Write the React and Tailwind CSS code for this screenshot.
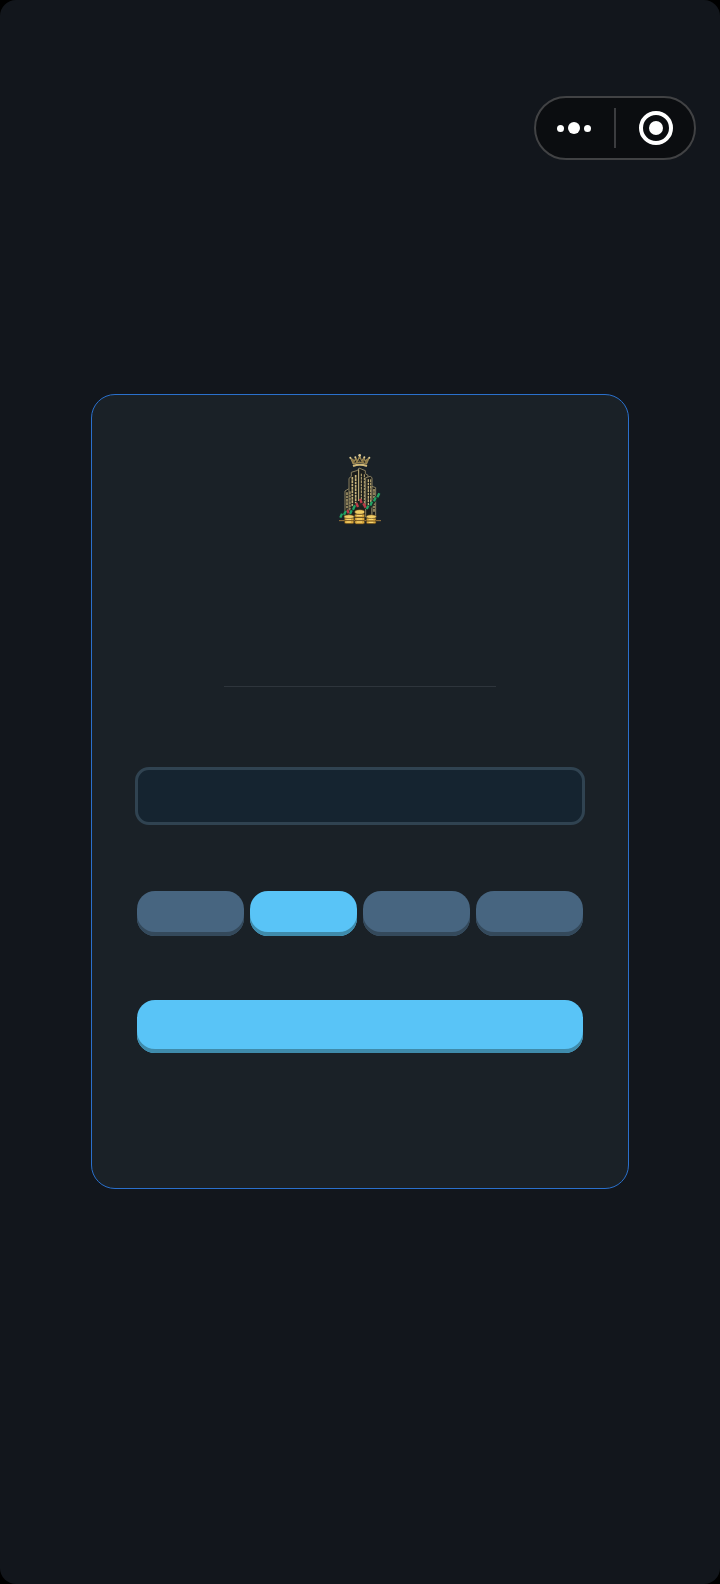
import React, { useState } from "react";

const options = ["one", "two", "three", "four"];

function Logo() {
  return (
    <svg viewBox="0 0 210 270" className="w-[70px] h-[90px]" aria-hidden="true">
      {/* Crown */}
      <path
        d="M84 57 L76 38 L89 47 L92 37 L98 47 L104 31 L110 47 L117 37 L120 47 L133 38 L125 57 Q104 49 84 57 Z"
        fill="#8d7845"
        stroke="#bda468"
        strokeWidth="2"
        strokeLinejoin="round"
      />
      <path d="M90 53 L92 47 M101 51 L104 42 L108 51 M119 53 L117 47" fill="none" stroke="#1b2127" strokeWidth="3" />
      <path d="M84 63 Q104 55 126 63" fill="none" stroke="#d0b879" strokeWidth="6" />
      <g fill="#dfcc94">
        <circle cx="104" cy="31" r="4" />
        <circle cx="76" cy="38" r="3" />
        <circle cx="133" cy="38" r="3" />
        <circle cx="91" cy="37" r="3" />
        <circle cx="118" cy="37" r="3" />
      </g>
      {/* Buildings */}
      <g fill="#1b1d1b" stroke="#8a8061" strokeWidth="3">
        <path d="M60 220 V138 L70 132 H80 V220 Z" />
        <path d="M72 215 V100 L79 94 V82 L98 76 L102 69 L121 77 V86 L129 91 V215 Z" />
        <path d="M122 215 V98 L136 94 L141 98 V215 Z" />
        <path d="M141 215 V124 L152 128 V215 Z" />
      </g>
      <g fill="none" stroke="#c5b27b" strokeWidth="5" strokeDasharray="8 2">
        <path d="M82 96 V185" />
        <path d="M92 90 V178" />
        <path d="M66 142 V206" strokeWidth="4" />
        <path d="M75 139 V198" strokeWidth="3" />
        <path d="M109 86 V168" strokeWidth="3" />
        <path d="M118 88 V178" strokeWidth="3" />
        <path d="M130 103 V183" strokeWidth="4" />
        <path d="M137 103 V176" strokeWidth="3" />
        <path d="M147 132 V202" strokeWidth="4" />
      </g>
      <path d="M101 73 V168" stroke="#d2bf85" strokeWidth="3" />
      {/* Price candles */}
      <path
        d="M48 215 L65 198 L76 204 L91 180 L101 185 L108 172 L120 187 L134 187 L162 148"
        fill="none"
        stroke="#1d2924"
        strokeWidth="10"
      />
      <path
        d="M46 218 L51 206 M57 209 L63 197 M75 207 L80 196 M84 194 L90 181 M125 192 L130 182 M136 182 L141 170 M147 169 L152 157 M157 157 L163 145"
        fill="none"
        stroke="#22a263"
        strokeWidth="7"
      />
      <path
        d="M67 195 L71 205 M94 174 L99 186 M105 162 L110 174 M115 175 L122 188"
        fill="none"
        stroke="#bd3b47"
        strokeWidth="7"
      />
      {/* Coins */}
      <path d="M42 227 H168" stroke="#a07b3c" strokeWidth="3" />
      <g fill="#d9a93e" stroke="#4f3a1a" strokeWidth="2">
        <rect x="58" y="226" width="29" height="10" rx="5" />
        <rect x="58" y="218" width="29" height="9" rx="4" />
        <ellipse cx="72" cy="215" rx="15" ry="6" fill="#f0cc64" />
        <rect x="89" y="226" width="30" height="11" rx="5" />
        <rect x="89" y="217" width="30" height="10" rx="4" />
        <rect x="89" y="207" width="30" height="10" rx="4" />
        <ellipse cx="104" cy="201" rx="15" ry="7" fill="#f0cc64" />
        <rect x="124" y="227" width="29" height="9" rx="4" />
        <rect x="124" y="219" width="29" height="9" rx="4" />
        <ellipse cx="139" cy="215" rx="15" ry="6" fill="#f0cc64" />
      </g>
      <path
        d="M64 223 H78 M64 231 H78 M95 212 H111 M95 222 H111 M95 231 H111 M131 223 H145 M131 232 H145"
        fill="none"
        stroke="#ffdc78"
        strokeWidth="3"
      />
    </svg>
  );
}

function WindowControls() {
  return (
    <div className="flex h-16 w-[162px] items-center rounded-full border-2 border-[#414244] bg-[#0b0d10]">
      <button
        type="button"
        aria-label="More"
        className="flex h-full flex-1 cursor-pointer items-center justify-center gap-1 pr-0.5"
      >
        <span className="size-[7px] rounded-full bg-white" />
        <span className="size-3 rounded-full bg-white" />
        <span className="size-[7px] rounded-full bg-white" />
      </button>
      <span className="h-10 w-0.5 bg-[#3b3c3f]" />
      <button
        type="button"
        aria-label="Close"
        className="flex h-full flex-1 cursor-pointer items-center justify-center pl-0.5"
      >
        <span className="flex size-[34px] items-center justify-center rounded-full border-4 border-white">
          <span className="size-3.5 rounded-full bg-white" />
        </span>
      </button>
    </div>
  );
}

export default function App() {
  const [selected, setSelected] = useState("two");
  const [value, setValue] = useState("");

  return (
    <div className="min-h-screen bg-black font-['Liberation_Sans',sans-serif]">
      <div className="flex min-h-screen flex-col rounded-2xl bg-[#12161c]">
        <header className="flex justify-end pt-24 pr-6">
          <WindowControls />
        </header>

        <main className="mx-[91px] mt-[234px] rounded-3xl border border-[#2a70cc] bg-[#1a2127] px-[45px] pt-[50px] pb-[135px]">
          <div className="flex justify-center">
            <Logo />
          </div>
          <hr className="mx-auto mt-[151px] w-[61%] border-[#2e353c]" />

          <form onSubmit={(e) => e.preventDefault()}>
            <div className="-mx-0.5 mt-20">
              <input
                type="text"
                aria-label="Value"
                value={value}
                onChange={(e) => setValue(e.target.value)}
                className="block h-[58px] w-full rounded-[14px] border-[3px] border-[#304351] bg-[#152430] px-4 text-xl text-white focus:outline-none"
              />
            </div>

            <div className="mt-[66px] grid grid-cols-4 gap-1.5">
              {options.map((option) => (
                <button
                  key={option}
                  type="button"
                  aria-label={`Option ${option}`}
                  aria-pressed={selected === option}
                  onClick={() => setSelected(option)}
                  className={`h-[45px] cursor-pointer rounded-[18px] ${
                    selected === option
                      ? "bg-[#59c4f7] shadow-[inset_0_-4px_0_#3f8bab]"
                      : "bg-[#476580] shadow-[inset_0_-4px_0_#34495b]"
                  }`}
                />
              ))}
            </div>

            <button
              type="submit"
              aria-label="Submit"
              className="mt-16 block h-[53px] w-full cursor-pointer rounded-[18px] bg-[#59c4f7] shadow-[inset_0_-4px_0_#3f8bab]"
            />
          </form>
        </main>
      </div>
    </div>
  );
}
